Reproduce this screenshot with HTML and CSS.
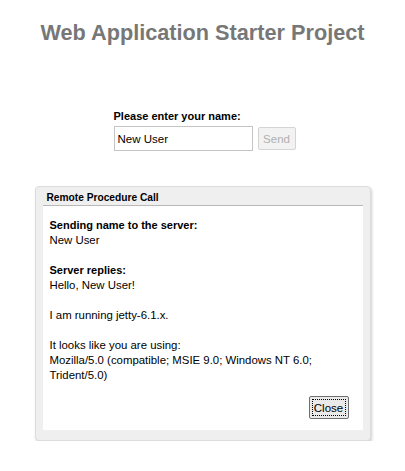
FILE: index.html
```html
<!DOCTYPE html>
<html lang="en">
<head>
    <meta charset="UTF-8">
    <title>Web Application Starter Project</title>
    <link rel="stylesheet" href="styles.css">
</head>
<body>
    <h1>Web Application Starter Project</h1>

    <div class="form-row">
        <table class="name-form">
            <tr>
                <td colspan="2" class="field-label">Please enter your name:</td>
            </tr>
            <tr>
                <td><input type="text" class="name-field" value="New User"></td>
                <td><button class="send-button" disabled>Send</button></td>
            </tr>
        </table>
    </div>

    <div class="dialog">
        <div class="dialog-caption">Remote Procedure Call</div>
        <div class="dialog-content">
            <div class="text-block">
                <b>Sending name to the server:</b><br>
                New User<br>
                <br>
                <b>Server replies:</b><br>
                Hello, New User!<br>
                <br>
                I am running jetty-6.1.x.<br>
                <br>
                It looks like you are using:<br>
                Mozilla/5.0 (compatible; MSIE 9.0; Windows NT 6.0; Trident/5.0)
            </div>
            <div class="dialog-buttons">
                <button class="close-button">Close</button>
            </div>
        </div>
    </div>
</body>
</html>
```

FILE: styles.css
```css
body, html {
    font-family: "Liberation Sans", Arial, sans-serif;
    background-color: #ffffff;
    margin: 0;
    padding: 0;
}
body {
    padding-top: 18px;
}
h1 {
    margin: 0;
    font-size: 21.7px;
    font-weight: bold;
    color: #777777;
    text-align: center;
    line-height: 30px;
}
.form-row {
    display: flex;
    justify-content: center;
    margin-top: 61px;
    padding-left: 4px;
}
.name-form {
    border-spacing: 0;
}
.name-form td {
    padding: 0;
    vertical-align: top;
}
.field-label {
    font-size: 11px;
    font-weight: bold;
    color: #000;
    line-height: 14px;
    padding-bottom: 3px !important;
}
.name-field {
    box-sizing: border-box;
    width: 139px;
    height: 25px;
    margin: 0 5px 0 0;
    padding: 2px 3px;
    border: 1px solid #c4c4c4;
    font-family: "Liberation Sans", Arial, sans-serif;
    font-size: 11.5px;
    color: #000;
}
.send-button {
    box-sizing: border-box;
    width: 38px;
    height: 23px;
    margin-top: 1px;
    padding: 0;
    border: 1px solid #d4d4d4;
    border-radius: 2px;
    background: #f2f2f2;
    font-family: "Liberation Sans", Arial, sans-serif;
    font-size: 11.5px;
    color: #b0b0b0;
}
.dialog {
    box-sizing: border-box;
    width: 336px;
    margin: 35px auto 0;
    padding: 0 7px 10px;
    border: 1px solid #dcdcdc;
    border-radius: 4px;
    background: #efefef;
    box-shadow: 1px 2px 3px #d0d0d0;
}
.dialog-caption {
    font-size: 10.2px;
    font-weight: bold;
    color: #000;
    line-height: 14px;
    padding: 4px 4px 0;
    height: 14px;
    border-bottom: 1px solid #b8b8b8;
}
.dialog-content {
    background: #ffffff;
    padding: 12px 14px 11px 7px;
}
.text-block {
    font-size: 11.4px;
    line-height: 15px;
    color: #000;
}
.text-block b {
    font-size: 11px;
}
.dialog-buttons {
    display: flex;
    justify-content: flex-end;
    margin-top: 13px;
}
.close-button {
    box-sizing: border-box;
    width: 40px;
    height: 23px;
    padding: 0;
    border: 1px solid #707070;
    outline: 1px dotted #000;
    outline-offset: -4px;
    border-radius: 2px;
    background: #eaeaea;
    font-family: "Liberation Sans", Arial, sans-serif;
    font-size: 11.5px;
    color: #000;
}
```
